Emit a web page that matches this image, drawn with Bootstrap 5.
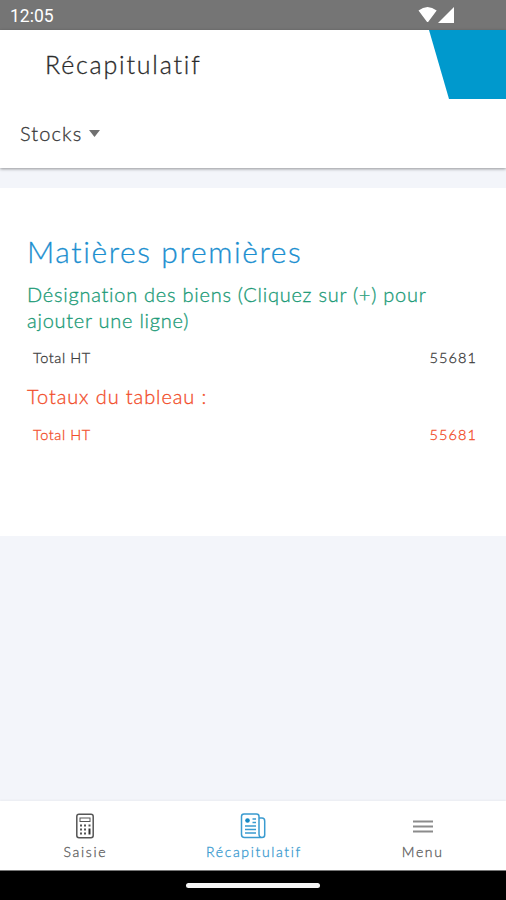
<!DOCTYPE html>
<html lang="fr">
<head>
<meta charset="utf-8">
<meta name="viewport" content="width=device-width, initial-scale=1">
<title>Récapitulatif</title>
<link href="https://cdn.jsdelivr.net/npm/bootstrap@5.3.0/dist/css/bootstrap.min.css" rel="stylesheet">
<style>
body{font-family:Lato,"Open Sans",sans-serif;background:#f3f5fa;color:#3c3c3c;height:900px;overflow:hidden}
.app-head,.sheet,.tabs{-webkit-text-stroke:.3px currentColor}
.status{height:30px;background:#757575;font:400 17.5px/32px Roboto,sans-serif;padding:0 50px 0 10px}
.status svg{margin-top:6px}
.app-head{height:138px;box-shadow:0 1px 3px rgba(0,0,0,.4)}
.title-row{height:69px;padding-left:45px}
.title-row h1{font-size:25px;line-height:30px;margin:19px 0 0;letter-spacing:1.8px;color:#2a2a2a;font-weight:300}
.corner{width:77px;height:69px;background:#0099cd;clip-path:polygon(0 0,100% 0,100% 100%,20px 100%)}
.picker{height:68px;padding:0 0 0 20px;font-size:20px;letter-spacing:1.1px;color:#383838;font-weight:300}
.picker svg{margin-left:-1px}
.sheet{margin-top:20px;height:348px;padding:44px 30px 0 27px}
.sheet h2{font-size:30px;line-height:38px;margin:0;letter-spacing:1.6px;color:#1b8fd0;font-weight:300}
.sheet h3{font-size:20px;line-height:26px;margin:0;letter-spacing:.75px;font-weight:300}
.sheet .desig{margin-top:11px}
.sheet .totals{margin-top:15px;letter-spacing:.9px}
.sheet .totals + .line{margin-top:16px}
.green{color:#1a9a76}.orange{color:#f24d2a}
.line{font-size:14.5px;line-height:20px;padding-left:6px;margin-top:15px;letter-spacing:.6px;font-weight:300}
.line span:last-child{letter-spacing:1.1px;margin-right:-1px}
.tabs{height:69px;box-shadow:0 -1px 2px rgba(0,0,0,.04);font-size:14px;letter-spacing:1.65px;color:#606060;font-weight:300}
.tabs a{color:inherit;padding-top:12px}
.tabs a.active{color:#3a9bd0}
.tabs a:not(.active) svg{margin-left:2px}
.tabs span{line-height:18px;margin:4px 0 0 2px}
.gesture{height:30px;background:#000;border-top:1px solid #777}
.gesture div{width:134px;height:5px;background:#f5f5f5}
</style>
</head>
<body class="d-flex flex-column">
<div class="status d-flex justify-content-between text-white flex-shrink-0">
  <span>12:05</span>
  <svg width="38" height="18" viewBox="0 0 38 18" fill="#fff"><path d="M.5 4.5Q9.500-2.500 18.700 4.500L10.500 15.500Q9.600 16.600 8.700 15.500ZM20 17 36 1V17Z"/></svg>
</div>
<header class="app-head bg-white flex-shrink-0">
  <div class="title-row d-flex justify-content-between">
    <h1>Récapitulatif</h1>
    <div class="corner"></div>
  </div>
  <div class="picker d-flex align-items-center gap-2"><span>Stocks</span>
    <svg width="11" height="7" viewBox="0 0 11 7"><path d="M0 0H11L5.500 7Z" fill="#707070"/></svg>
  </div>
</header>
<main class="sheet bg-white flex-shrink-0">
  <h2>Matières premières</h2>
  <h3 class="green desig">Désignation des biens (Cliquez sur (+) pour<br>ajouter une ligne)</h3>
  <div class="line d-flex justify-content-between"><span>Total HT</span><span>55681</span></div>
  <h3 class="orange totals">Totaux du tableau :</h3>
  <div class="line d-flex justify-content-between orange"><span>Total HT</span><span>55681</span></div>
</main>
<nav class="tabs bg-white row g-0 mt-auto flex-shrink-0">
  <a href="#" class="col d-flex flex-column align-items-center text-decoration-none">
    <svg width="18" height="26" viewBox="0 0 18 26" fill="none" stroke="#555"><rect x=".8" y="1.300" width="16.400" height="23.400" rx="2.200" stroke-width="1.500"/><rect x="4" y="5" width="10" height="3.500"/><path d="M4 12.500h2M8 12.500h2M12.500 12.500h2M4 16.500h2M8 16.500h2M4 20.500h2M8 20.500h2" stroke-width="2"/><path d="M13.500 15.500v6" stroke="#333" stroke-width="2"/></svg>
    <span>Saisie</span>
  </a>
  <a href="#" class="col active d-flex flex-column align-items-center text-decoration-none">
    <svg width="26" height="26" viewBox="0 0 26 26" fill="none" stroke="#3a9bd0" stroke-width="1.500"><path d="M19 21V3.500Q19 1 16.500 1H4Q1.500 1 1.500 3.500V21.500Q1.500 24.500 4.500 24.500H22Q24.700 24.500 24.700 22V8Q24.700 5 22 5H19V21Q19 24.500 22 24.500"/><circle cx="7.500" cy="7.500" r="2.300" fill="#1689c4" stroke="none"/><path d="M12.500 6h3.500M12.500 9.500h3.500M5 13h11M5 16.500h11M5 20h11" stroke-width="1.300"/></svg>
    <span>Récapitulatif</span>
  </a>
  <a href="#" class="col d-flex flex-column align-items-center text-decoration-none">
    <svg width="20" height="26" viewBox="0 0 20 26"><path d="M0 8.500h20M0 13.500h20M0 18.500h20" stroke="#8b8b8b" stroke-width="2.200"/></svg>
    <span>Menu</span>
  </a>
</nav>
<div class="gesture d-flex align-items-center justify-content-center flex-shrink-0"><div class="rounded-1"></div></div>
<script src="https://cdn.jsdelivr.net/npm/bootstrap@5.3.0/dist/js/bootstrap.bundle.min.js"></script>
</body>
</html>
